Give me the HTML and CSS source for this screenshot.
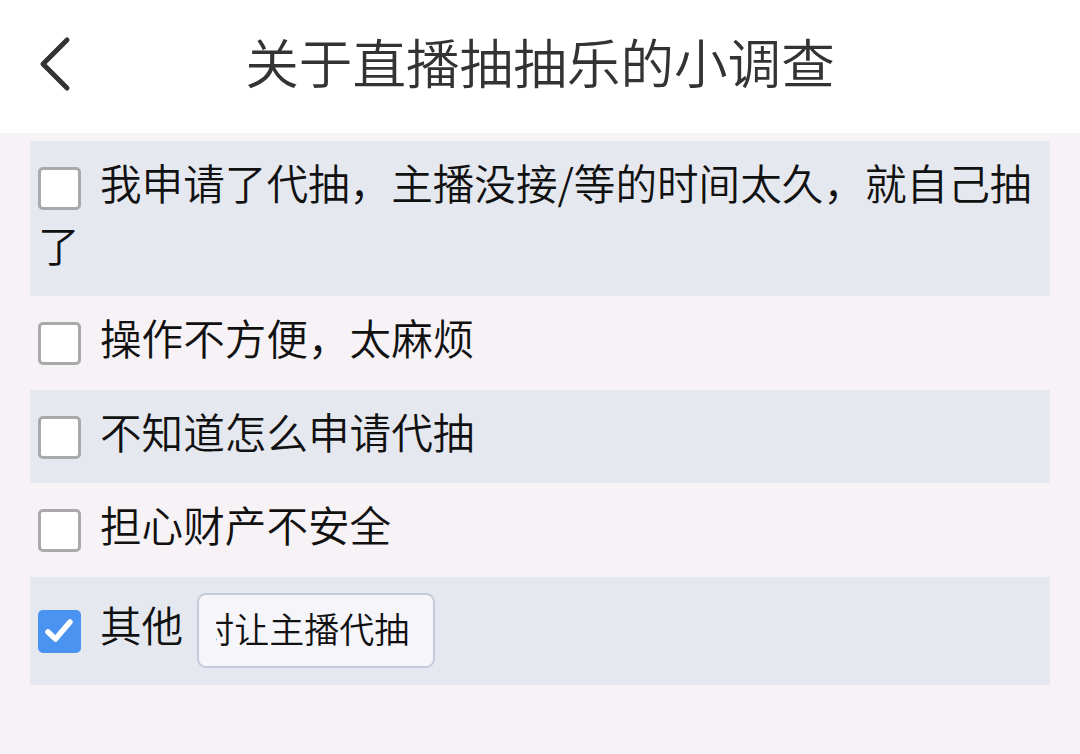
FILE: index.html
```html
<!DOCTYPE html>
<html lang="zh-CN">
<head>
<meta charset="utf-8">
<title>关于直播抽抽乐的小调查</title>
<link rel="stylesheet" href="styles.css">
</head>
<body>
<header class="topbar">
  <span class="back">
    <svg width="34" height="56" viewBox="0 0 34 56"><polyline points="29,4 5,28 29,52" fill="none" stroke="#333" stroke-width="5" stroke-linecap="round" stroke-linejoin="round"/></svg>
  </span>
  <h1 class="title">关于直播抽抽乐的小调查</h1>
</header>
<main class="list">
  <div class="row shaded"><span class="box"></span><span class="label">我申请了代抽，主播没接/等的时间太久，就自己抽了</span></div>
  <div class="row"><span class="box"></span><span class="label">操作不方便，太麻烦</span></div>
  <div class="row shaded"><span class="box"></span><span class="label">不知道怎么申请代抽</span></div>
  <div class="row"><span class="box"></span><span class="label">担心财产不安全</span></div>
  <div class="row shaded other"><span class="box checked"><svg width="43" height="43" viewBox="0 0 43 43"><polyline points="10,22 17.5,29 32,12" fill="none" stroke="#fff" stroke-width="5.5" stroke-linecap="round" stroke-linejoin="round"/></svg></span><span class="label">其他</span><span class="field"><span class="field-text">对让主播代抽</span></span></div>
</main>
</body>
</html>
```
FILE: styles.css
```css
html, body {
  margin: 0;
  padding: 0;
}
body {
  width: 1080px;
  height: 754px;
  background: #f6f2f6;
  font-family: "Noto Sans CJK SC", "Noto Sans", sans-serif;
  font-weight: 350;
  color: #111;
  overflow: hidden;
}
.topbar {
  position: relative;
  height: 133px;
  background: #fff;
  display: flex;
  align-items: center;
  justify-content: center;
}
.back {
  position: absolute;
  left: 38px;
  top: 36px;
  width: 34px;
  height: 56px;
  display: block;
}
.back svg { display: block; }
.title {
  margin: 0;
  font-size: 53.6px;
  font-weight: 350;
  color: #333;
  line-height: 1;
  margin-top: -12px;
}
.list {
  padding: 8px 30px 0;
}
.row {
  padding: 16px 8px 16px 8px;
  font-size: 41.6px;
  line-height: 61.5px;
  word-break: break-all;
}
.shaded {
  background: #e6e8ef;
}
.label {
  position: relative;
  top: -5px;
}
.box {
  display: inline-block;
  box-sizing: border-box;
  width: 43px;
  height: 43px;
  border: 3px solid #a9a9ab;
  border-radius: 5px;
  background: #fff;
  vertical-align: top;
  margin-top: 10px;
  margin-right: 19px;
}
.box.checked {
  background: #4b93f1;
  border-color: #4b93f1;
}
.box.checked svg {
  display: block;
  margin: -3px;
}
.other {
  display: flex;
  align-items: center;
  padding-top: 16px;
  padding-bottom: 17px;
}
.other .box {
  margin-top: 0;
  flex: none;
  position: relative;
  top: 1px;
}
.other .label {
  top: -5px;
}
.field {
  display: block;
  box-sizing: border-box;
  width: 238px;
  height: 75px;
  margin-left: 14px;
  padding: 0 8px 0 17px;
  border: 2.5px solid #c6cbdc;
  border-radius: 9px;
  background: #f6f5fa;
  font-size: 35px;
  line-height: 66px;
}
.field-text {
  display: block;
  overflow: hidden;
  white-space: nowrap;
  text-indent: -17px;
}
```
